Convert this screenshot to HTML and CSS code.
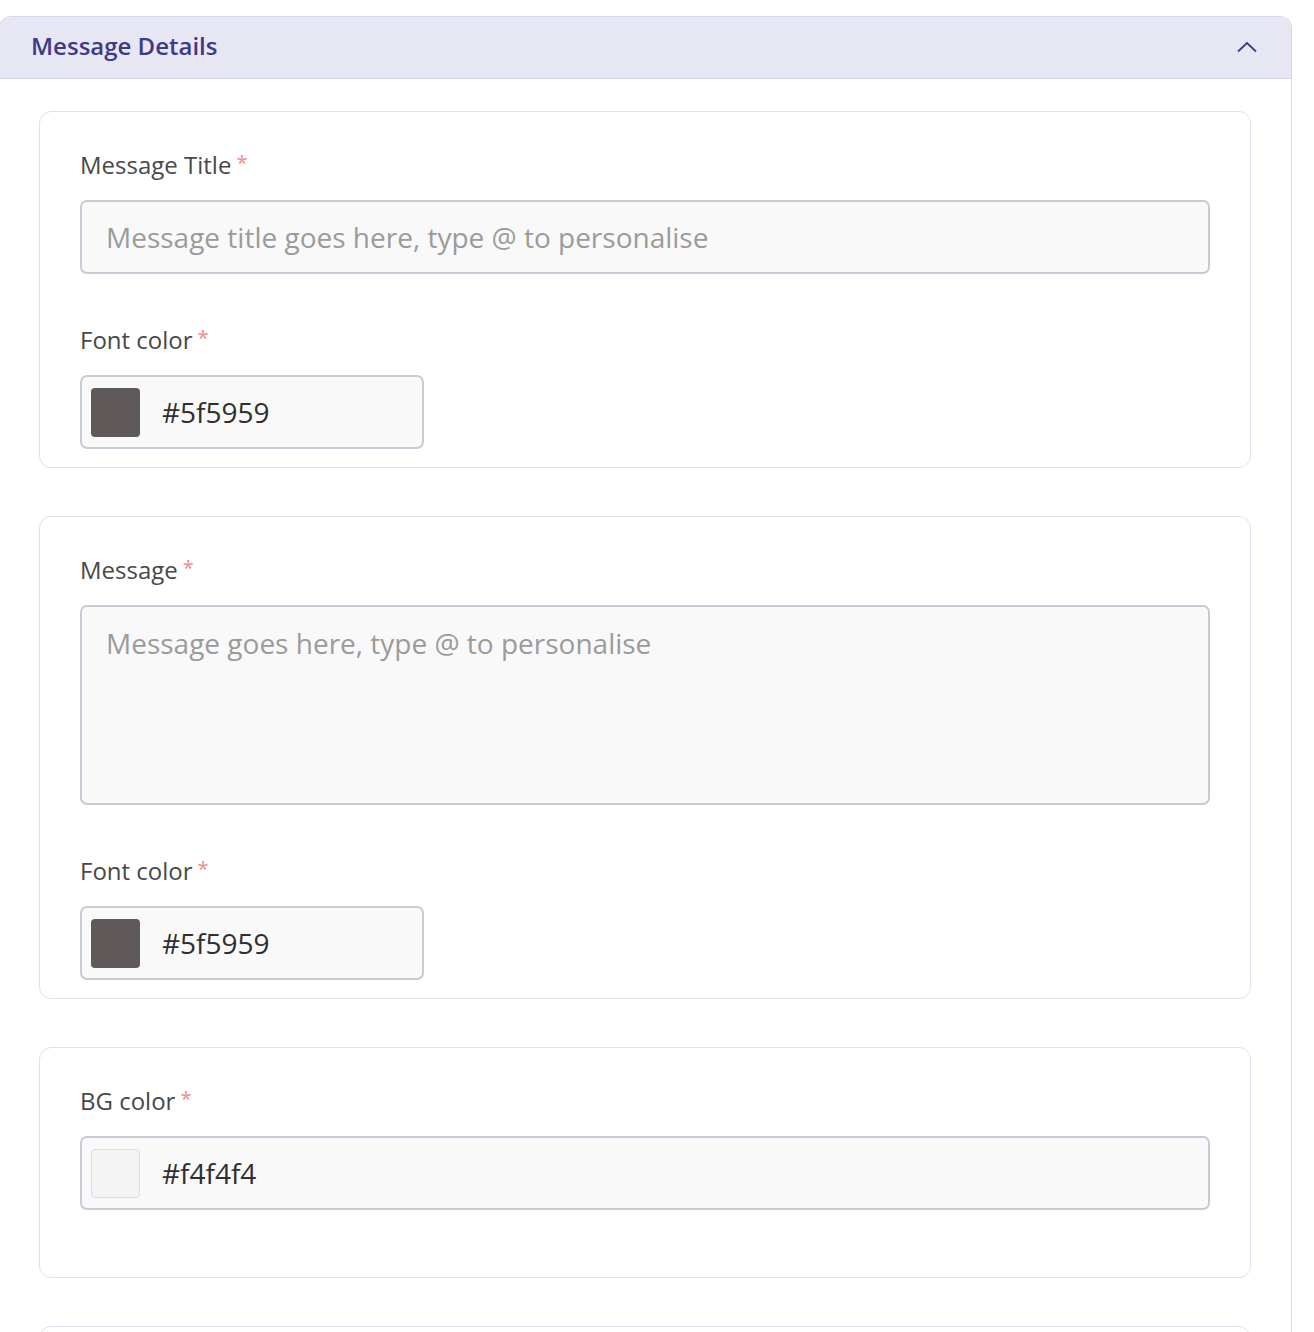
FILE: index.html
```html
<!DOCTYPE html>
<html>
<head>
<meta charset="utf-8">
<link rel="stylesheet" href="styles.css">
</head>
<body>
<div class="panel">
  <div class="panel-header">
    <span class="panel-title">Message Details</span>
    <svg class="chevron" width="22" height="14" viewBox="0 0 22 14"><path d="M2 11.5 L11 3 L20 11.5" fill="none" stroke="#3f3a85" stroke-width="1.8"/></svg>
  </div>
  <div class="panel-body">
    <div class="card">
      <div class="field">
        <label class="label">Message Title <span class="req">*</span></label>
        <div class="input"><span class="placeholder">Message title goes here, type @ to personalise</span></div>
      </div>
      <div class="field">
        <label class="label">Font color <span class="req">*</span></label>
        <div class="color-input"><span class="swatch dark"></span><span class="value">#5f5959</span></div>
      </div>
    </div>
    <div class="card">
      <div class="field">
        <label class="label">Message <span class="req">*</span></label>
        <div class="input textarea"><span class="placeholder">Message goes here, type @ to personalise</span></div>
      </div>
      <div class="field">
        <label class="label">Font color <span class="req">*</span></label>
        <div class="color-input"><span class="swatch dark"></span><span class="value">#5f5959</span></div>
      </div>
    </div>
    <div class="card card-last">
      <div class="field">
        <label class="label">BG color <span class="req">*</span></label>
        <div class="color-input full"><span class="swatch light"></span><span class="value">#f4f4f4</span></div>
      </div>
    </div>
    <div class="card card-stub"></div>
  </div>
</div>
</body>
</html>
```
FILE: styles.css
```css
* { box-sizing: border-box; }
html, body { margin: 0; padding: 0; background: #fff; overflow: hidden; }
body { font-family: "Open Sans", "Noto Sans", sans-serif; height: 1332px; }

.panel {
  margin: 16px 0 0 -1px;
  width: 1293px;
  border: 1px solid #d9d7ee;
  border-bottom: none;
  border-radius: 12px 12px 0 0;
  height: 1400px;
}
.panel-header {
  height: 62px;
  background: #e7e7f4;
  border-bottom: 1px solid #d6d4ee;
  border-radius: 11px 11px 0 0;
  display: flex;
  align-items: center;
  justify-content: space-between;
  padding: 0 33px 0 31px;
}
.panel-title {
  font-size: 24px;
  line-height: 30px;
  font-weight: 600;
  color: #403a86;
  margin-top: -3px;
}
.chevron { display: block; margin-top: -2px; }

.panel-body {
  padding: 32px 40px 0 39px;
  display: flex;
  flex-direction: column;
  gap: 48px;
}
.card {
  border: 1px solid #e1dfee;
  border-radius: 12px;
  padding: 38px 40px 18px 40px;
  display: flex;
  flex-direction: column;
  gap: 51px;
}
.card-last { padding-bottom: 67px; }
.card-stub { height: 60px; padding: 0; }

.field { display: flex; flex-direction: column; gap: 20px; }
.label {
  display: flex;
  align-items: flex-start;
  height: 30px;
  font-size: 24px;
  font-weight: 500;
  line-height: 30px;
  color: #484848;
}
.req {
  color: #f08a8a;
  font-size: 20px;
  line-height: 20px;
  font-weight: 400;
  margin: 3px 0 0 5px;
}

.input {
  height: 74px;
  border: 2px solid #c8cad5;
  border-radius: 7px;
  background: #f9f9f9;
  padding: 0 24px;
  display: flex;
  align-items: center;
}
.placeholder {
  font-size: 28px;
  color: #9b9b9b;
}
.textarea {
  height: 200px;
  align-items: flex-start;
  padding-top: 17px;
}

.color-input {
  width: 344px;
  height: 74px;
  border: 2px solid #c8cad5;
  border-radius: 7px;
  background: #f9f9f9;
  padding: 0 9px;
  display: flex;
  align-items: center;
  gap: 22px;
}
.color-input.full { width: auto; }
.swatch {
  width: 49px;
  height: 49px;
  border-radius: 4px;
  flex: none;
}
.swatch.dark { background: #5f5959; }
.swatch.light { background: #f4f4f4; border: 1px solid #dcdaf0; }
.value {
  font-size: 28px;
  color: #2f2f2f;
}
```
